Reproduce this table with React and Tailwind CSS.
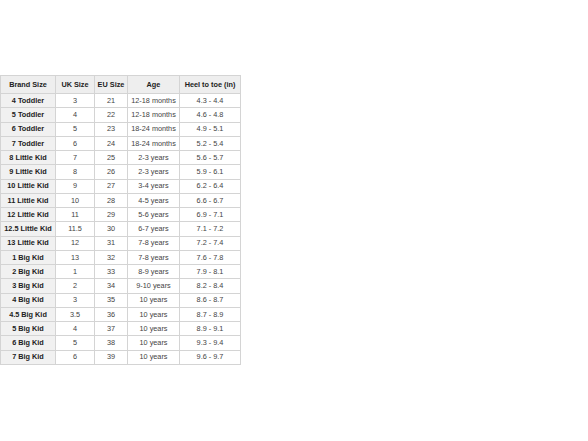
import React from "react";

const rows = [
  ["4 Toddler", "3", "21", "12-18 months", "4.3 - 4.4"],
  ["5 Toddler", "4", "22", "12-18 months", "4.6 - 4.8"],
  ["6 Toddler", "5", "23", "18-24 months", "4.9 - 5.1"],
  ["7 Toddler", "6", "24", "18-24 months", "5.2 - 5.4"],
  ["8 Little Kid", "7", "25", "2-3 years", "5.6 - 5.7"],
  ["9 Little Kid", "8", "26", "2-3 years", "5.9 - 6.1"],
  ["10 Little Kid", "9", "27", "3-4 years", "6.2 - 6.4"],
  ["11 Little Kid", "10", "28", "4-5 years", "6.6 - 6.7"],
  ["12 Little Kid", "11", "29", "5-6 years", "6.9 - 7.1"],
  ["12.5 Little Kid", "11.5", "30", "6-7 years", "7.1 - 7.2"],
  ["13 Little Kid", "12", "31", "7-8 years", "7.2 - 7.4"],
  ["1 Big Kid", "13", "32", "7-8 years", "7.6 - 7.8"],
  ["2 Big Kid", "1", "33", "8-9 years", "7.9 - 8.1"],
  ["3 Big Kid", "2", "34", "9-10 years", "8.2 - 8.4"],
  ["4 Big Kid", "3", "35", "10 years", "8.6 - 8.7"],
  ["4.5 Big Kid", "3.5", "36", "10 years", "8.7 - 8.9"],
  ["5 Big Kid", "4", "37", "10 years", "8.9 - 9.1"],
  ["6 Big Kid", "5", "38", "10 years", "9.3 - 9.4"],
  ["7 Big Kid", "6", "39", "10 years", "9.6 - 9.7"],
];

const headers = ["Brand Size", "UK Size", "EU Size", "Age", "Heel to toe (in)"];

export default function App() {
  return (
    <div className="w-[588px] h-[441px] bg-white pt-[75px]" style={{ fontFamily: '"Liberation Sans", Arial, sans-serif' }}>
      <div className="grid grid-cols-[55px_39px_33px_52px_61px] grid-rows-[18px_repeat(19,14.26px)] w-[241px] border-l border-t border-[#d4d4d4] text-[7.3px] leading-none">
        {headers.map((h) => (
          <div key={h} className="flex items-center justify-center bg-[#eeeeee] border-r border-b border-[#d4d4d4] font-bold text-[#222]">
            {h}
          </div>
        ))}
        {rows.map((r) =>
          r.map((c, i) => (
            <div
              key={r[0] + i}
              className={
                i === 0
                  ? "flex items-center justify-center bg-[#f1f1f1] border-r border-b border-[#d4d4d4] font-bold text-[#222]"
                  : "flex items-center justify-center bg-white border-r border-b border-[#d4d4d4] text-[#444]"
              }
            >
              {c}
            </div>
          ))
        )}
      </div>
    </div>
  );
}
